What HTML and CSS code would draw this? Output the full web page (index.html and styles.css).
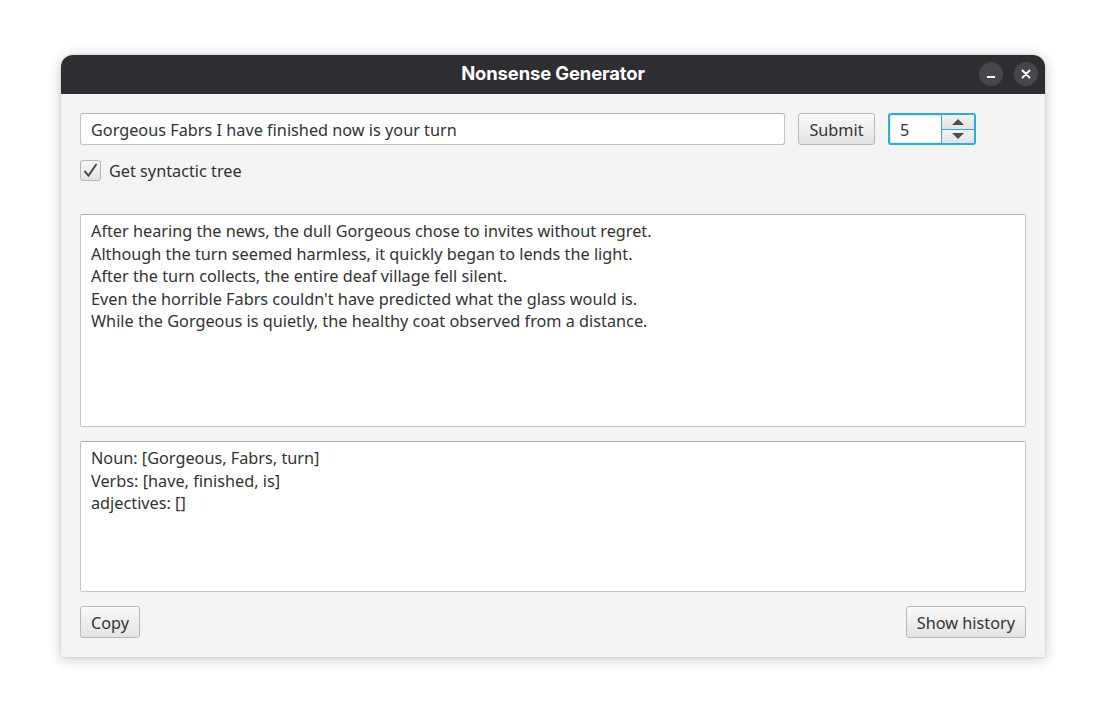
FILE: index.html
```html
<!DOCTYPE html>
<html>
<head>
<meta charset="utf-8">
<link rel="stylesheet" href="styles.css">
</head>
<body>
<div class="window">
  <div class="titlebar">
    <span class="title">Nonsense Generator</span>
    <div class="controls">
      <span class="ctl"><svg width="10" height="10" viewBox="0 0 10 10"><rect x="1" y="7" width="8" height="2" fill="#fff"/></svg></span>
      <span class="ctl"><svg width="10" height="10" viewBox="0 0 10 10"><path d="M1.5 1.5 L8.5 8.5 M8.5 1.5 L1.5 8.5" stroke="#fff" stroke-width="2" stroke-linecap="round"/></svg></span>
    </div>
  </div>
  <div class="content">
    <div class="row">
      <div class="field input-main">Gorgeous Fabrs I have finished now is your turn</div>
      <div class="btn submit">Submit</div>
      <div class="spinner">
        <div class="spin-val">5</div>
        <div class="spin-btns">
          <div class="spin-up"><span class="tri-up"></span></div>
          <div class="spin-down"><span class="tri-down"></span></div>
        </div>
      </div>
    </div>
    <div class="check-row">
      <span class="checkbox"><svg width="17" height="17" viewBox="0 0 17 17"><path d="M2.5 9 L6.5 13.6 L14.5 2" fill="none" stroke="#4a4a4a" stroke-width="2"/></svg></span>
      <span class="check-label">Get syntactic tree</span>
    </div>
    <div class="area area-main">After hearing the news, the dull Gorgeous chose to invites without regret.<br>Although the turn seemed harmless, it quickly began to lends the light.<br>After the turn collects, the entire deaf village fell silent.<br>Even the horrible Fabrs couldn't have predicted what the glass would is.<br>While the Gorgeous is quietly, the healthy coat observed from a distance.</div>
    <div class="area area-tree">Noun: [Gorgeous, Fabrs, turn]<br>Verbs: [have, finished, is]<br>adjectives: []</div>
    <div class="bottom-row">
      <div class="btn">Copy</div>
      <div class="btn">Show history</div>
    </div>
  </div>
</div>
</body>
</html>
```
FILE: styles.css
```css
* { box-sizing: border-box; }
html, body { margin: 0; background: #ffffff; }
body {
  padding: 55px 61px;
  font-family: "Noto Sans", sans-serif;
  font-size: 16.25px;
  color: #333333;
}
.window {
  width: 984px;
  height: 602px;
  background: #f4f4f4;
  border-radius: 12px 12px 0 0;
  box-shadow: 0 2px 14px rgba(0,0,0,0.22), 0 0 2px rgba(0,0,0,0.2);
  display: flex;
  flex-direction: column;
  overflow: hidden;
}
.titlebar {
  height: 39px;
  flex: none;
  background: #2e2e32;
  display: flex;
  align-items: center;
  justify-content: center;
  position: relative;
}
.title {
  color: #ffffff;
  font-family: "Inter", sans-serif;
  font-weight: 700;
  font-size: 18.4px;
  letter-spacing: -0.1px;
  margin-top: -4px;
}
.controls {
  position: absolute;
  right: 7px;
  top: 7px;
  display: flex;
  gap: 11px;
}
.ctl {
  width: 24px;
  height: 24px;
  border-radius: 50%;
  background: #47474b;
  display: flex;
  align-items: center;
  justify-content: center;
}
.content {
  flex: 1;
  padding: 19px 19px 19px 19px;
  display: flex;
  flex-direction: column;
}
.row {
  display: flex;
  align-items: center;
  height: 32px;
}
.field {
  height: 32px;
  background: #ffffff;
  border: 1px solid #c2c2c2;
  border-top-color: #b3b3b3;
  border-radius: 3px;
  padding: 2px 10px 0;
  display: flex;
  align-items: center;
}
.input-main { width: 705px; }
.btn {
  height: 32px;
  padding: 2px 10px 0;
  border: 1px solid #b8b8b8;
  border-radius: 3px;
  background: linear-gradient(#f9f9f9, #e4e4e4);
  display: flex;
  align-items: center;
  justify-content: center;
  box-shadow: inset 0 1px 0 rgba(255,255,255,0.8);
}
.submit { margin-left: 13px; width: 77px; }
.spinner {
  margin-left: 13px;
  width: 88px;
  height: 32px;
  border: 2px solid #2aaedc;
  border-radius: 3px;
  display: flex;
  background: #dbeef6;
}
.spin-val {
  flex: 1;
  background: #ffffff;
  margin: 1px 0 1px 1px;
  padding: 2px 0 0 9px;
  display: flex;
  align-items: center;
}
.spin-btns {
  width: 33px;
  display: flex;
  flex-direction: column;
  border-left: 1px solid #2aaedc;
}
.spin-up, .spin-down {
  flex: 1;
  background: linear-gradient(#f4f4f4, #e2e2e2);
  display: flex;
  align-items: center;
  justify-content: center;
}
.spin-up { border-bottom: 1px solid #2aaedc; }
.tri-up {
  width: 0; height: 0;
  border-left: 6px solid transparent;
  border-right: 6px solid transparent;
  border-bottom: 6px solid #4f4f4f;
}
.tri-down {
  width: 0; height: 0;
  border-left: 6px solid transparent;
  border-right: 6px solid transparent;
  border-top: 6px solid #4f4f4f;
}
.check-row {
  margin-top: 15px;
  height: 21px;
  display: flex;
  align-items: center;
}
.checkbox {
  width: 21px;
  height: 21px;
  border: 1px solid #b5b5b5;
  border-radius: 3px;
  background: linear-gradient(#f8f8f8, #e3e3e3);
  display: flex;
  align-items: center;
  justify-content: center;
}
.check-label { margin-left: 8px; }
.area {
  background: #ffffff;
  border: 1px solid #c4c4c4;
  border-top-color: #b0b0b0;
  border-radius: 2px;
  padding: 5px 10px;
  line-height: 22.5px;
}
.area-main { margin-top: 33px; height: 213px; }
.area-tree { margin-top: 14px; height: 151px; }
.bottom-row {
  margin-top: 14px;
  display: flex;
  justify-content: space-between;
}
```
